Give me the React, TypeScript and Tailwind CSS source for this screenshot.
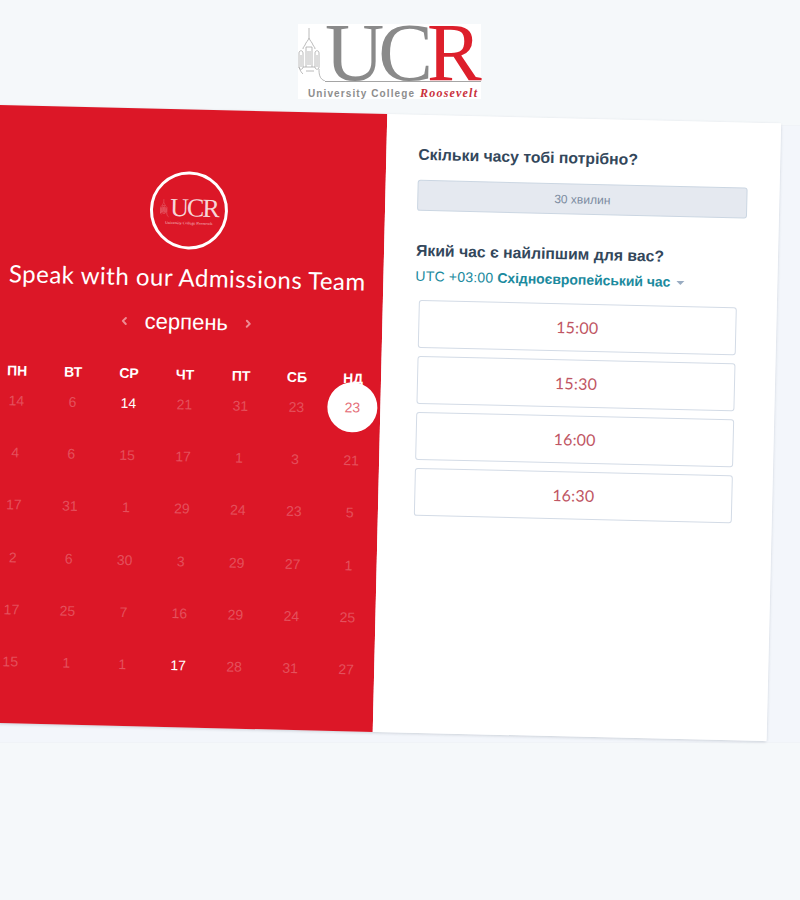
import { ChevronLeft, ChevronRight } from "lucide-react";

const DAY_NAMES = ["ПН", "ВТ", "СР", "ЧТ", "ПТ", "СБ", "НД"];

const WEEKS = [
  [14, 6, 14, 21, 31, 23, 23],
  [4, 6, 15, 17, 1, 3, 21],
  [17, 31, 1, 29, 24, 23, 5],
  [2, 6, 30, 3, 29, 27, 1],
  [17, 25, 7, 16, 29, 24, 25],
  [15, 1, 1, 17, 28, 31, 27],
];

const TIMES = ["15:00", "15:30", "16:00", "16:30"];

function Tower({ className }: { className?: string }) {
  return (
    <svg viewBox="0 0 27 54" fill="none" stroke="currentColor" strokeWidth="0.8" className={className}>
      <path d="M11 1v10M11 11c-1 3-3 4-4 7-1 2-2 2-2 4M11 11c1 3 3 4 4 7 1 2 2 2 2 4" />
      <path d="M8 20h6M8 20v20M14 20v20M10 24v14M12 24v14" />
      <path d="M1 26c0-3 4-3 4 0v14c0 3-4 3-4 0zM17 26c0-3 4-3 4 0v14c0 3-4 3-4 0z" />
      <path d="M3 28v12M19 28v12M5 40h12M8 44h8" />
      <path d="M1 40c1 4 3 6 4 7M21 42c0 4 0 10 6 12" />
    </svg>
  );
}

function Logo() {
  return (
    <div className="ml-[298px] flex h-[75px] w-[183px] flex-col bg-white font-['Liberation_Serif',serif]">
      <div className="flex h-[58px] items-start">
        <Tower className="mt-[3px] h-[54px] w-[27px] shrink-0 text-[#a8a8a8]" />
        <div className="flex h-[58px] flex-1 items-center border-b border-[#a5a5a5] text-[82px] leading-[58px] tracking-[-6px]">
          <span className="text-[#8a8a8a]">UC</span>
          <span className="text-[#dd1f2b]">R</span>
        </div>
      </div>
      <div className="mt-[2px] flex items-baseline pl-[10px] whitespace-nowrap">
        <span className="font-['Liberation_Sans',sans-serif] text-[10px] font-bold tracking-[1.1px] text-[#8d8d8d]">
          University College
        </span>
        <span className="ml-[5px] text-[12px] font-bold italic tracking-[1.2px] text-[#c9303c]">Roosevelt</span>
      </div>
    </div>
  );
}

function CalendarPanel() {
  return (
    <div className="flex w-[392px] shrink-0 flex-col items-center bg-[#dc1727] pt-[62px] text-white">
      <div className="flex h-[78px] w-[78px] flex-col items-center justify-center rounded-full border-[3px] border-white font-['Liberation_Serif',serif]">
        <div className="flex items-center text-[26px] leading-[24px] tracking-[-2px] text-[#f6d5d8]">
          <Tower className="mr-[1px] h-[20px] w-[9px] text-[#f3b9bd]" />
          UCR
        </div>
        <div className="text-[4px] leading-[5px] text-[#f6d5d8]">University College Roosevelt</div>
      </div>

      <div className="mt-[12px] font-['Lato',sans-serif] text-[24px] leading-[32px] tracking-[0.5px] whitespace-nowrap">
        Speak with our Admissions Team
      </div>

      <div className="mt-[13px] flex h-8 items-center gap-[14px] font-['Liberation_Sans',sans-serif]">
        <ChevronLeft className="h-3 w-3 text-white/50" strokeWidth={4} />
        <span className="text-[22px] leading-8">серпень</span>
        <ChevronRight className="h-3 w-3 text-white/50" strokeWidth={4} />
      </div>

      <div className="mt-[26px] grid w-full grid-cols-7 font-['Liberation_Sans',sans-serif] text-sm">
        {DAY_NAMES.map((name) => (
          <div key={name} className="h-5 text-center leading-5 font-bold">
            {name}
          </div>
        ))}
      </div>

      <div className="grid w-full grid-cols-7 gap-y-[12.2px] font-['Liberation_Sans',sans-serif] text-sm">
        {WEEKS.flatMap((week, row) =>
          week.map((day, col) => {
            const selected = row === 0 && col === 6;
            const bright = (row === 0 && col === 2) || (row === 5 && col === 3);
            return (
              <div key={`${row}-${col}`} className="flex h-10 items-center justify-center">
                {selected ? (
                  <span className="-mt-[2px] flex h-[50px] w-[50px] shrink-0 items-center justify-center rounded-full bg-white text-[#e56f7a]">
                    {day}
                  </span>
                ) : (
                  <span className={bright ? "text-white" : "text-white/25"}>{day}</span>
                )}
              </div>
            );
          }),
        )}
      </div>
    </div>
  );
}

function BookingPanel() {
  return (
    <div className="flex-1 bg-white pt-[30px] pr-8 pl-8 font-['Liberation_Sans',sans-serif] text-[#33475b]">
      <h2 className="h-5 text-[15.75px] leading-5 font-bold">Скільки часу тобі потрібно?</h2>
      <div className="mt-[15px] flex h-[31px] items-center justify-center rounded-[3px] border border-[#cbd6e2] bg-[#e5e9f0] text-xs text-[#7c8ba0]">
        30 хвилин
      </div>
      <h2 className="mt-[30px] h-5 text-[15.75px] leading-5 font-bold">Який час є найліпшим для вас?</h2>
      <div className="mt-[5px] flex h-5 items-center text-sm leading-5 text-[#1b8a9e]">
        <span className="tracking-[0.2px]">UTC +03:00</span>
        <span className="ml-[4px] tracking-[-0.05px] font-bold">Східноєвропейський час</span>
        <span className="mt-[2px] ml-[6px] h-0 w-0 border-x-[4px] border-t-[4px] border-x-transparent border-t-[#99acc2]" />
      </div>
      <div className="mt-[14px] mr-[8px] ml-[4px] flex flex-col gap-2">
        {TIMES.map((time) => (
          <div
            key={time}
            className="flex h-12 items-center justify-center rounded-[3px] border border-[#d3dbe6] font-['Lato',sans-serif] text-base tracking-[0.2px] text-[#bf5664]"
          >
            {time}
          </div>
        ))}
      </div>
    </div>
  );
}

export default function App() {
  return (
    <div className="h-[900px] w-[800px] overflow-hidden bg-[#f5f8fa] pt-6">
      <Logo />
      <div className="mt-[26px] h-[618px] border-y border-[#f0f3f7] bg-[#f3f6fb]">
        <div className="-mt-[12px] -ml-[12px] flex h-[618px] w-[786px] rotate-[1.35deg] rounded-[3px] shadow-[0_1px_3px_rgba(45,62,80,0.2)]">
          <CalendarPanel />
          <BookingPanel />
        </div>
      </div>
    </div>
  );
}
